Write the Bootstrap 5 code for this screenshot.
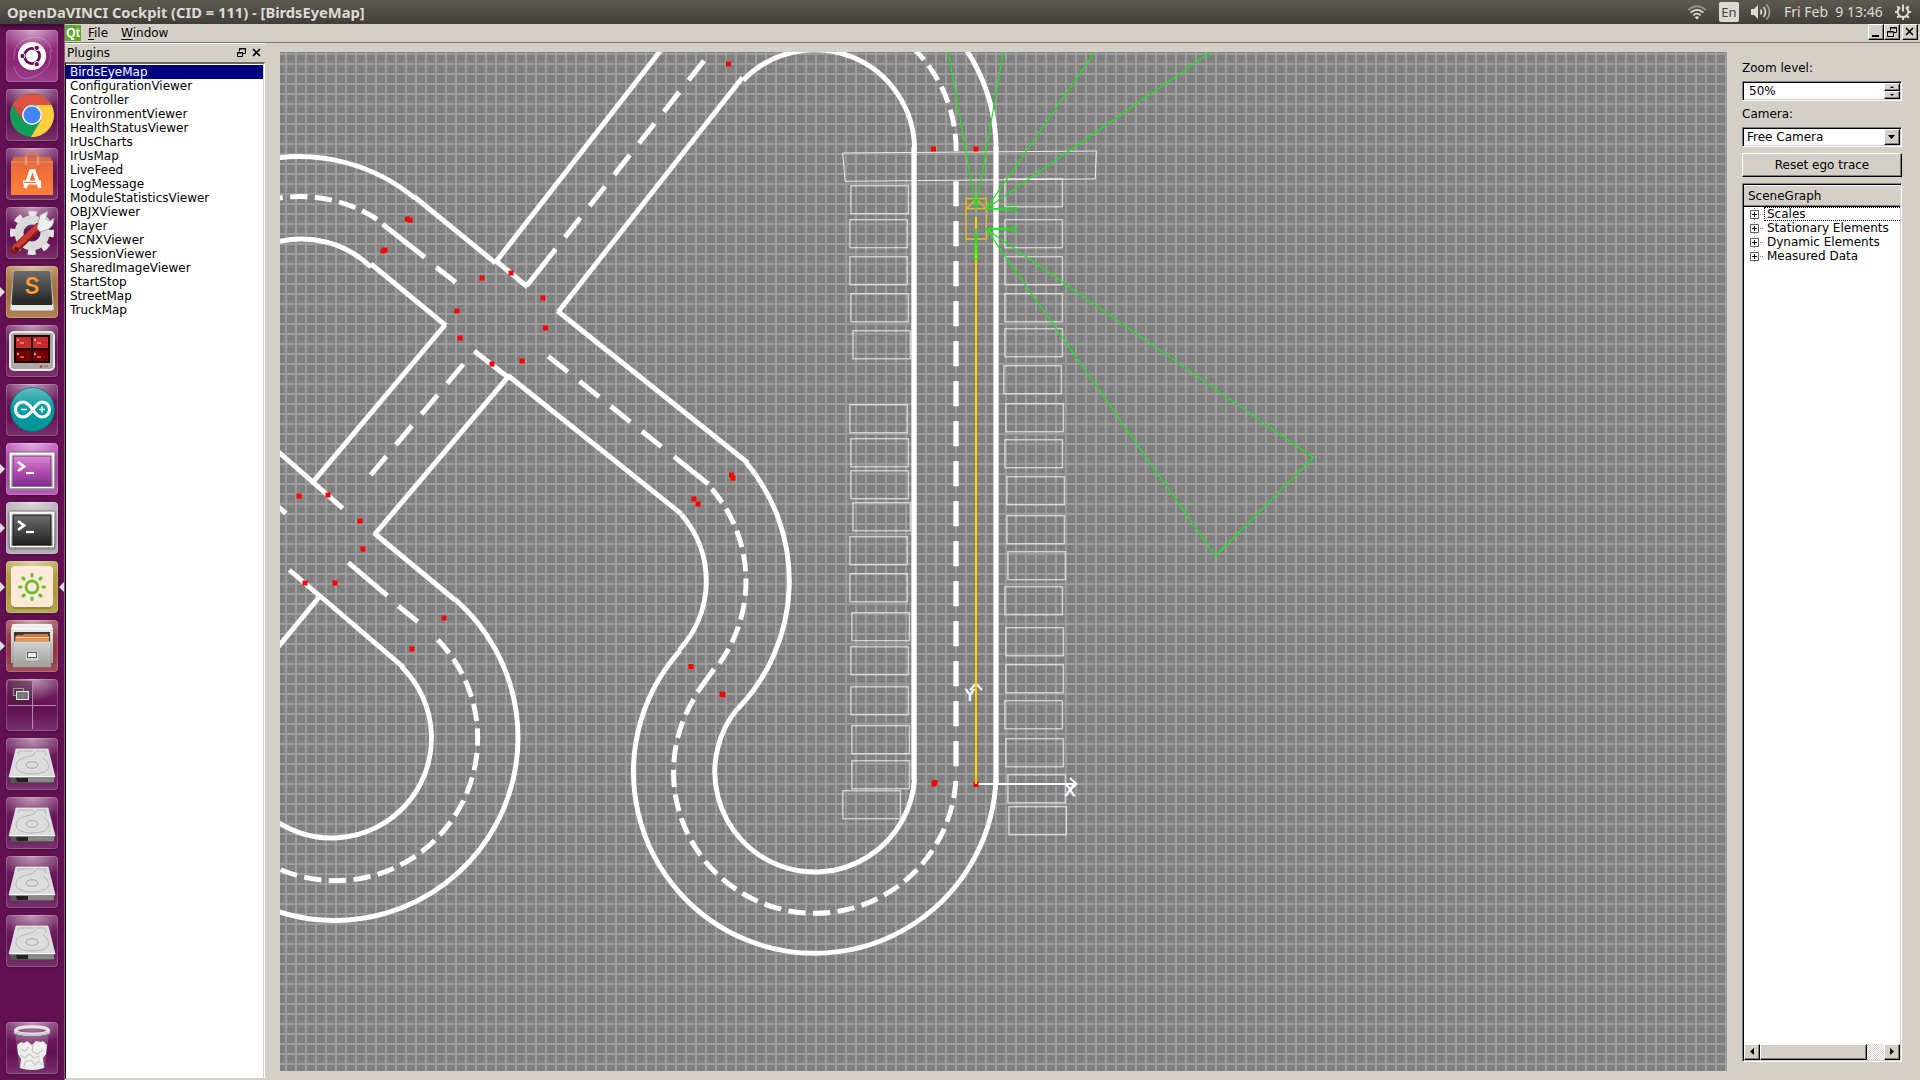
<!DOCTYPE html>
<html lang="en">
<head>
<meta charset="utf-8">
<title>OpenDaVINCI Cockpit</title>
<link rel="stylesheet" href="https://cdn.jsdelivr.net/npm/bootstrap@5.3.0/dist/css/bootstrap.min.css">
<style>
:root{--face:#d4d0c8;--shade:#808080}
body{width:1920px;height:1080px;overflow:hidden;background:var(--face);color:#000;font:12px/14px "DejaVu Sans",sans-serif}
svg{display:block}
.topbar{height:24px;background:linear-gradient(#5d5a50,#55534b 30%,#3f3e39);color:#dfdbd2;font:14px/18px "Noto Sans",sans-serif}
.topbar .wintitle{font-weight:700;font-size:14.7px;padding-left:7px;white-space:pre}
.tray{height:24px;width:240px;padding-left:7px;gap:12px}
.clock{white-space:pre;width:99px}
.lang{width:20px;height:20px;background:#dfdbd2;color:#45433e;border-radius:2px;font:13px/20px "Noto Sans",sans-serif;text-align:center}
.launcher{width:65px;background:linear-gradient(#3a0a31,#631053 6px);border-right:1px solid #8a5a80;padding:6px 0 6px 6px}
.tile{width:52px;height:52px;border-radius:4px;margin-bottom:7px;position:relative;background:radial-gradient(ellipse 34px 22px at 50% 0,rgba(255,255,255,.55),rgba(255,255,255,0)),linear-gradient(rgba(255,255,255,.1),rgba(255,255,255,0) 60%,rgba(255,255,255,.14)),var(--tint,#631053);box-shadow:inset 0 0 0 1px rgba(255,255,255,.2),0 1px 3px rgba(0,0,0,.25)}
.tile.running::before,.tile.focused::after{content:"";position:absolute;top:21px;border:5px solid transparent}
.tile.running::before{left:-6px;border-left-color:#ddd;border-right:0}
.tile.focused::after{right:-6px;border-right-color:#ddd;border-left:0}
.tint-dash{--tint:#8c2478}.tint-editor{--tint:#a56f35}.tint-pink{--tint:#b43bb3}.tint-grey{--tint:#aaa1ac}.tint-olive{--tint:#aa9a35}.tint-red{--tint:#8d3540}
.menubar-qt{height:19px;border-bottom:1px solid #7b7871}
.menubar-qt .qt-logo{margin-top:1px}
.menubar-qt .entry{margin-left:7px;line-height:18px}
.menubar-qt .entry+.entry{margin-left:13px}
.menubar-qt u{text-underline-offset:2px}
.raised{background:var(--face);border:1px solid;border-color:#fff #000 #000 #fff;box-shadow:inset -1px -1px var(--shade)}
.sunken{background:#fff;border:1px solid;border-color:var(--shade) #fff #fff var(--shade);box-shadow:inset 1px 1px #000,inset -1px -1px var(--face)}
.mdi{width:16px;height:16px}
.mdi-group{padding-right:2px}
.mdi-close{margin-left:2px}
.dock{width:200px;border-top:1px solid #fff;padding-bottom:1px}
.dock-title{height:18px;line-height:18px;padding:0 3px 0 2px}
.plugins{border:1px solid;border-color:#6d6a64 #fff #d4d0c8 #000;border-top-width:2px;padding:1px 1px 0 0;background:#fff;box-shadow:inset -1px 0 var(--face)}
.plugins div{height:14px;line-height:14px;padding-left:4px}
.plugins .chosen{background:#000080;color:#fff}
.mapview{width:1447px;height:1019px;margin:9px 15px 0 15px;background:#808080}
.side{width:160px;padding-top:18px}
.side .caption{height:14px;line-height:14px}
.side .field{height:20px;padding:1px;margin:6px 0}
.side .field .value{line-height:17px;padding-left:5px}
.side .field .choice{line-height:16px;padding-left:3px}
.reset{height:24px;line-height:22px}
.tree{height:879px;margin-top:6px;padding:1px}
.tree-head{height:22px;line-height:21px;padding-left:4px;background:var(--face);border-top:1px solid #fff;border-bottom:1px solid #000;box-shadow:inset 0 -1px var(--shade)}
.tree-row{height:14px;padding-left:6px}
.tree-row svg{width:14px;height:14px;flex:none}
.tree-row .node{flex:1;padding-left:3px;line-height:14px;white-space:nowrap;height:14px}
.tree-row .current{border:1px dotted #000;border-right:0;padding-left:2px;line-height:12px}
.hbar{height:16px;background:conic-gradient(#fff 25%,#d4d0c8 0 50%,#fff 0 75%,#d4d0c8 0) 0 0/2px 2px}
.thumb{width:107px}
</style>
<script src="https://cdn.jsdelivr.net/npm/bootstrap@5.3.0/dist/js/bootstrap.bundle.min.js"></script>
</head>
<body class="d-flex flex-column">
<header class="topbar d-flex justify-content-between align-items-center flex-shrink-0">
  <div class="wintitle">OpenDaVINCI Cockpit (CID = 111) - [BirdsEyeMap]</div>
  <div class="tray d-flex align-items-center">
    <svg width="20" height="16" viewBox="0 0 20 16" fill="none" stroke="#dfdbd2" stroke-width="1.7"><path d="M1 6Q10-1.5 19 6" opacity=".45"/><path d="M3.6 8.7Q10 3 16.4 8.700"/><path d="M6.300 11.400Q10 8 13.700 11.400"/><path d="M7.800 13.200 10 15.500 12.200 13.200Q10 11.500 7.800 13.200Z" fill="#dfdbd2" stroke="none"/></svg>
    <div class="lang">En</div>
    <svg width="21" height="18" viewBox="0 0 21 18" fill="none" stroke="#dfdbd2" stroke-width="1.600"><path d="M0 6h3l4-4v14l-4-4H0z" fill="#dfdbd2" stroke="none"/><path d="M9.500 6.500q2 2.500 0 5"/><path d="M12.500 4q4 5 0 10"/><path d="M15.500 1.500q6 7.500 0 15" opacity=".6"/></svg>
    <span class="clock">Fri Feb  9 13:46</span>
    <svg width="16" height="18" viewBox="-8 -9 16 18" fill="none" stroke="#dfdbd2" stroke-width="2"><path d="M-2.800-4.700A5.300 5.300 0 1 0 2.800-4.700"/><path d="M0-7.500V-.5"/><path d="M-5.500 0H-8M5.500 0H8M0 5.500V8M-4 4-5.800 5.800M4 4 5.800 5.800M-4-4-5.800-5.800M4-4 5.800-5.800"/></svg>
  </div>
</header>
<div class="d-flex flex-grow-1">
  <nav class="launcher d-flex flex-column flex-shrink-0">
    <svg width="0" height="0" class="position-absolute"><defs>
      <linearGradient id="metal" x2="0" y2="1"><stop stop-color="#f4f4f2"/><stop offset="1" stop-color="#a0a09e"/></linearGradient>
      <linearGradient id="dark" x2="0" y2="1"><stop stop-color="#6c6c6c"/><stop offset="1" stop-color="#222"/></linearGradient>
      <linearGradient id="pink" x2="0" y2="1"><stop stop-color="#d58bce"/><stop offset=".5" stop-color="#b44cb2"/><stop offset="1" stop-color="#79308a"/></linearGradient>
      <linearGradient id="bag" x2="0" y2="1"><stop stop-color="#d9693c"/><stop offset=".4" stop-color="#f07038"/><stop offset="1" stop-color="#ff8038"/></linearGradient>
      <linearGradient id="teal" x2="0" y2="1"><stop stop-color="#66bcc0"/><stop offset=".5" stop-color="#009aa0"/><stop offset="1" stop-color="#00949a"/></linearGradient>
      <symbol id="disk" viewBox="0 0 52 52"><path d="M4 39h44l-1 6H5z" fill="#555"/><path d="M10 40h12v4H11z" fill="#222"/><path d="M22 40h26v4H22z" fill="#888"/><path d="M10 11h32l7 28H3z" fill="#dcdcdc" stroke="#efefef" stroke-width=".7"/><path d="M3.500 38.500h45" stroke="#fff"/><path d="M12 16l1-3h14M30 13h9l1 5M29 14l-1 3-11 3q-8 3-7 9 2 7 16 7 16 0 17-8-.500-5-6-8" fill="none" stroke="#b8b8b8"/><ellipse cx="26" cy="27" rx="6" ry="3.300" fill="#ddd" stroke="#aaa"/></symbol>
      <symbol id="term" viewBox="0 0 52 52"><rect x="3" y="9" width="46" height="38" rx="1.500" fill="url(#metal)" stroke="#777"/><rect x="4.500" y="10.500" width="43" height="34" fill="none" stroke="#fff"/></symbol>
    </defs></svg>
    <div class="tile tint-dash"><svg viewBox="0 0 52 52"><g fill="none" stroke="#fff" stroke-opacity=".25"><path d="M8 30Q6 12 24 8T46 22"/><path d="M44 20Q48 38 30 46T8 36"/></g><circle cx="26" cy="26" r="14" fill="#fff"/><circle cx="26" cy="26" r="7.600" fill="none" stroke="#631053" stroke-width="2.800"/><g fill="#631053" stroke="#fff" stroke-width="1"><circle cx="16.500" cy="26" r="2.600"/><circle cx="30.800" cy="17.800" r="2.600"/><circle cx="30.800" cy="34.200" r="2.600"/></g></svg></div>
    <div class="tile"><svg viewBox="0 0 52 52"><circle cx="26" cy="26" r="22" fill="#0f9d58"/><path d="M26 26 6.500 16A22 22 0 0 1 45.500 16H26z" fill="#db5345"/><path d="M45.500 16A22 22 0 0 1 25 48L35 31 30 16z" fill="#ffcd40"/><path d="M6.500 16 17 31 26 26V16z" fill="#db5345"/><path d="M6.500 16 17 32 22 30 18 20z" fill="#c8463a" opacity=".6"/><circle cx="26" cy="26" r="10" fill="#f1f1f1"/><circle cx="26" cy="26" r="8.400" fill="#4285f4"/></svg></div>
    <div class="tile"><svg viewBox="0 0 52 52"><path d="M20 18V9q0-3.500 3-3.500h6q3 0 3 3.500v9" fill="none" stroke="#dd7a50" stroke-width="2.600"/><path d="M5 14 8 9h36l3 5v33H5z" fill="url(#bag)"/><path d="M5 14h42" stroke="#ee9873"/><path d="M20 17V9M32 17V9" stroke="#e99a78" stroke-width="2.500"/><g fill="none" stroke="#fff" stroke-width="3.600"><path d="M19 40 25 23h3l6 17"/><path d="M17 34.500H35" stroke-width="4"/></g><path d="M18 34.500h12" stroke="#ee7038"/></svg></div>
    <div class="tile"><svg viewBox="0 0 52 52"><circle cx="26" cy="26" r="13" fill="none" stroke="#dadada" stroke-width="9"/><circle cx="26" cy="26" r="19.500" fill="none" stroke="#e4e4e4" stroke-width="5" stroke-dasharray="8 7.320" stroke-dashoffset="4"/><path d="M8 43 32 20" stroke="#831a1a" stroke-width="8" stroke-linecap="round"/><path d="M9 41 31 20" stroke="#cb3a34" stroke-width="5.500" stroke-linecap="round"/><path d="M31 21 34 8l8-4-2 8 4 2 4-3q0 10-8 12l-6 2z" fill="#eee" stroke="#999" stroke-width=".8"/><circle cx="10" cy="42" r="2" fill="#661111"/></svg></div>
    <div class="tile running tint-editor"><svg viewBox="0 0 52 52"><path d="M7 7h38l3 34v2q0 2-3 2H7q-3 0-3-2v-2z" fill="#e8e8e8" stroke="#777" stroke-width=".6"/><path d="M10 5h32q2 0 2.500 3l2 30H5.500l2-30q.500-3 2.500-3z" fill="url(#dark)"/><path d="M6 34h40v5H6z" fill="#292929"/><text x="26" y="28" text-anchor="middle" font-family="Inter" font-weight="600" font-size="23" fill="#ff9c2e">S</text></svg></div>
    <div class="tile"><svg viewBox="0 0 52 52"><rect x="4" y="7" width="44" height="38" rx="4" fill="#a9aaa3" stroke="#e7e7e3" stroke-width="2"/><rect x="8" y="10" width="36" height="28" fill="#200"/><path d="M10 12h15v11H10zM27 12h15v11H27z" fill="#c82c2c"/><path d="M10 25h15v11H10zM27 25h15v11H27z" fill="#740000"/><g fill="none" stroke="#fcc" stroke-width=".9"><path id="prm" d="M11 14l2 1-2 1M14 18h4"/><use href="#prm" x="17"/><use href="#prm" y="14"/><use href="#prm" x="17" y="14"/></g><circle cx="35" cy="41.500" r="1.200" fill="red"/><path d="M38 41.500h4" stroke="#888" stroke-width="2"/></svg></div>
    <div class="tile"><svg viewBox="0 0 52 52"><circle cx="26.500" cy="25.500" r="22" fill="url(#teal)" stroke="#087177" stroke-width=".8"/><path d="M27 25.500C22 19 19 18 17 18a7.500 7.500 0 0 0 0 15c3 0 6-2 10-7.500S33 18 36 18a7.500 7.500 0 0 1 0 15c-3 0-6-2-9-7.500z" fill="none" stroke="#fff" stroke-width="3.200"/><path d="M15 25.500h6M33 25.500h6M36 22.500v6" stroke="#fff" stroke-width="1.600"/></svg></div>
    <div class="tile running tint-pink"><svg viewBox="0 0 52 52"><use href="#term"/><rect x="7" y="13" width="38" height="30" fill="url(#pink)" stroke="#83338c"/><path d="M12 19l6 4.500-6 4.500" fill="none" stroke="#fff" stroke-width="2.800"/><path d="M20 30h8" stroke="#fff" stroke-width="2.200"/></svg></div>
    <div class="tile running tint-grey"><svg viewBox="0 0 52 52"><use href="#term"/><rect x="7" y="13" width="38" height="30" fill="url(#dark)" stroke="#111"/><path d="M12 19l6 4.500-6 4.500" fill="none" stroke="#fff" stroke-width="2.800"/><path d="M20 30h8" stroke="#fff" stroke-width="2.200"/></svg></div>
    <div class="tile running focused tint-olive"><svg viewBox="0 0 52 52"><rect x="5" y="6" width="42" height="42" rx="4" fill="#756c22" opacity=".5"/><rect x="5" y="5" width="42" height="41" rx="4" fill="#ffe9d9"/><circle cx="26" cy="26" r="6" fill="none" stroke="#70bd35" stroke-width="2.800"/><g stroke="#70bd35" stroke-width="3.200" stroke-linecap="round"><path d="M26 13.500v1.500M26 37v1.500M13.500 26H15M37 26h1.500M17 17l1 1M34 34l1 1M17 35l1-1M34 18l1-1"/></g></svg></div>
    <div class="tile running tint-red"><svg viewBox="0 0 52 52"><path d="M6 5q1-1 2-1h36q1 0 2 1l1 6v32H5V11z" fill="url(#metal)"/><path d="M5 8.500h42" stroke="#fff"/><path d="M8 12h36v10H8z" fill="#3b3a38"/><path d="M9 17l2-2h6l1-1h24v2h1v6H9z" fill="#d8793c"/><path d="M10 17.700h33" stroke="#fff0d0"/><path d="M10 20h33" stroke="#f0b070"/><path d="M7 21.500h38v24.500q0 1-1 1H8q-1 0-1-1z" fill="url(#metal)" stroke="#999" stroke-width=".5"/><path d="M7 22h38v24H7z" fill="#999" opacity=".35"/><rect x="19.500" y="30.500" width="13" height="10" rx="2" fill="#d4d4d4" stroke="#bbb"/><rect x="21.500" y="32.500" width="9" height="5" fill="#eee" stroke="#555"/></svg></div>
    <div class="tile"><svg viewBox="0 0 52 52"><rect x="2" y="2" width="24" height="24" fill="#4a1b3c" opacity=".55"/><path d="M26.500 2v48M2 26.500h48" stroke="#b58cae"/><rect x="7.500" y="9.500" width="10" height="7" fill="none" stroke="#999"/><rect x="10.500" y="12.500" width="12" height="8" fill="#777" stroke="#e6e6e6"/></svg></div>
    <div class="tile"><svg viewBox="0 0 52 52"><use href="#disk"/></svg></div>
    <div class="tile"><svg viewBox="0 0 52 52"><use href="#disk"/></svg></div>
    <div class="tile"><svg viewBox="0 0 52 52"><use href="#disk"/></svg></div>
    <div class="tile"><svg viewBox="0 0 52 52"><use href="#disk"/></svg></div>
    <div class="tile mt-auto mb-0"><svg viewBox="0 0 52 52"><path d="M9 10 13 46q13 4 26 0l4-36z" fill="#fff" opacity=".16"/><path d="M11 23l4-3 3 1 3-2 5 4 4-4 5 1 2-1 4 4-1 9-3 4 1 10q-12 4-24 0l1-9-3-5z" fill="#eeeeec"/><path d="M14 27l5 2 4-4M27 22l-1 7 5 3 6-4M14 33l5 3 4-4 5 4 6-2M18 45l1-5 6-2 4 5 4-4 3 4" fill="none" stroke="#c8c8c2" stroke-width="1.100"/><ellipse cx="26" cy="8.500" rx="16.500" ry="3.800" fill="none" stroke="#e6e8e6" stroke-width="3"/><path d="M8 9v2.500q18 5 36 0V9q-18 6-36 0z" fill="#c9ccc9"/></svg></div>
  </nav>
  <main class="d-flex flex-column flex-grow-1">
    <div class="menubar-qt d-flex flex-shrink-0">
      <svg width="16" height="16" viewBox="0 0 16 16" class="qt-logo"><path d="M0 0h16v16H0z" fill="#60a82d"/><text x="8" y="12" text-anchor="middle" font-family="Liberation Sans" font-weight="700" font-size="12" fill="#fff">Qt</text></svg>
      <span class="entry"><u>F</u>ile</span><span class="entry"><u>W</u>indow</span>
      <div class="mdi-group d-flex ms-auto">
        <svg class="mdi raised" viewBox="0 0 14 14"><path d="M3 10h7v2H3z"/></svg>
        <svg class="mdi raised" viewBox="0 0 14 14" fill="none" stroke="#000"><path d="M5.500 5.500v-3h6v5h-3M5 3h7M2.500 6.500h6v5h-6zM2 7h7"/></svg>
        <svg class="mdi mdi-close raised" viewBox="0 0 14 14" stroke="#000" stroke-width="1.600"><path d="M3 3l7 7M10 3l-7 7"/></svg>
      </div>
    </div>
    <div class="d-flex flex-grow-1">
      <aside class="dock d-flex flex-column flex-shrink-0">
        <div class="dock-title d-flex align-items-center"><span>Plugins</span>
          <svg class="ms-auto" width="26" height="12" viewBox="0 0 26 12" fill="none" stroke="#000"><path d="M3.500 4.500v-3h6v5h-3M3 2h7M1.500 5.500h5v4h-5zM1 6h6"/><path d="M17 2l7 7M24 2l-7 7" stroke-width="1.600"/></svg></div>
        <div class="plugins flex-grow-1">
          <div class="chosen">BirdsEyeMap</div><div>ConfigurationViewer</div><div>Controller</div><div>EnvironmentViewer</div><div>HealthStatusViewer</div><div>IrUsCharts</div><div>IrUsMap</div><div>LiveFeed</div><div>LogMessage</div><div>ModuleStatisticsViewer</div><div>OBJXViewer</div><div>Player</div><div>SCNXViewer</div><div>SessionViewer</div><div>SharedImageViewer</div><div>StartStop</div><div>StreetMap</div><div>TruckMap</div>
        </div>
      </aside>
      <svg class="mapview flex-shrink-0" viewBox="280 52 1447 1019">
        <defs><pattern id="grid" x="285" y="63" width="10" height="10" patternUnits="userSpaceOnUse"><path d="M0 0h10v2H2v8H0z" fill="#9d9d9d"/></pattern></defs>
        <path d="M280 52h1447v1019H280z" fill="url(#grid)"/>
        <g id="roads" fill="none" stroke="#fff" stroke-width="4.900"></g>
        <g id="boxes" fill="none" stroke="#fff" stroke-opacity=".6" stroke-width="1.500"></g>
        <path d="M842.700 153 1096.300 151 1095.300 178.900 845.200 181.300Z" fill="none" stroke="#fff" stroke-opacity=".85"/>
        <g fill="none" stroke="#fff" stroke-width="2"><path d="M976 784h100M1070 778l6.500 6-6.500 6M970 690l6-6.500 6 6.500"/></g>
        <g fill="#fff" stroke="#fff" stroke-width=".5" font-family="DejaVu Sans" font-size="16" text-anchor="middle"><text x="1070" y="796">X</text><text x="970" y="700.500">Y</text></g>
        <g id="dots" fill="#f00"></g>
        <path d="M976 217v567" stroke="#ffd000" stroke-width="2"/>
        <path d="M966 198.500h20.500v40.500H966zM966 208.500h20.500M967 208l9-9 9.500 9" fill="none" stroke="#e3b91c" stroke-width="1.300"/>
        <g fill="none" stroke="#14ea14" stroke-width="1.200"><path d="M948.300 52 976 209 1003.300 52M976 198v10M1095 52 986 209 1210.700 52M986 209l30.500-1.500v3zM986 228.700l30.500-1v3zM986 228.700 1313.300 457.500 1215.300 556ZM976 228.500l-1.500 30.500h3z"/></g>
      </svg>
      <aside class="side flex-shrink-0">
        <div class="caption">Zoom level:</div>
        <div class="field sunken d-flex"><span class="value">50%</span>
          <div class="ms-auto d-flex flex-column"><svg class="raised" width="16" height="8" viewBox="0 0 14 6"><path d="M5 4h4L7 2z"/></svg><svg class="raised" width="16" height="8" viewBox="0 0 14 6"><path d="M5 2h4L7 4z"/></svg></div></div>
        <div class="caption">Camera:</div>
        <div class="field sunken d-flex"><span class="choice">Free Camera</span>
          <svg class="raised ms-auto" width="16" height="16" viewBox="0 0 14 14"><path d="M3 5h7l-3.500 4z"/></svg></div>
        <div class="reset raised text-center">Reset ego trace</div>
        <div class="tree sunken d-flex flex-column">
          <div class="tree-head flex-shrink-0">SceneGraph</div>
          <div class="tree-row d-flex"><svg viewBox="0 0 14 14"><use href="#plus"/></svg><span class="node current">Scales</span></div>
          <div class="tree-row d-flex"><svg viewBox="0 0 14 14"><use href="#plus"/></svg><span class="node">Stationary Elements</span></div>
          <div class="tree-row d-flex"><svg viewBox="0 0 14 14"><use href="#plus"/></svg><span class="node">Dynamic Elements</span></div>
          <div class="tree-row d-flex"><svg viewBox="0 0 14 14"><g id="plus" fill="none"><path d="M4.500 1v2M4.500 12v2M10 7.500h4" stroke="#808080" stroke-dasharray="1"/><path d="M.500 3.500h8v8h-8z" fill="#fff" stroke="#606060"/><path d="M2 7.500h5M4.500 5v5" stroke="#000"/></g></svg><span class="node">Measured Data</span></div>
          <div class="hbar mt-auto d-flex">
            <svg class="raised" width="16" height="16" viewBox="0 0 14 14"><path d="M9 3v7L5 6.500z"/></svg>
            <div class="thumb raised"></div>
            <svg class="raised ms-auto" width="16" height="16" viewBox="0 0 14 14"><path d="M5 3v7l4-3.500z"/></svg>
          </div>
        </div>
      </aside>
    </div>
  </main>
</div>
<script>
const NS = 'http://www.w3.org/2000/svg';
const add = (id, tag, attrs) => {
  const el = document.createElementNS(NS, tag);
  for (const k in attrs) el.setAttribute(k, attrs[k]);
  document.getElementById(id).appendChild(el);
};
const pt = (cx, cy, r, a) => [cx + r * Math.cos(a * Math.PI / 180), cy + r * Math.sin(a * Math.PI / 180)];
// Arc from angle a to angle b, in degrees clockwise from east
const arc = (cx, cy, r, a, b) => add('roads', 'path', {
  d: `M${pt(cx, cy, r, a)}A${r} ${r} 0 ${Math.abs(b - a) > 180 ? 1 : 0} ${b > a ? 1 : 0} ${pt(cx, cy, r, b)}`
});
const dashArc = (cx, cy, r, start, count, step) => {
  for (let i = 0; i < count; i++) arc(cx, cy, r, start + i * step, start + i * step + Math.sign(step) * 7);
};
const line = (x1, y1, x2, y2, dashed) => add('roads', 'path', {
  d: `M${x1} ${y1}L${x2} ${y2}`, ...(dashed ? {'stroke-dasharray': '25 15'} : {})
});

// South-east loop
arc(814.8, 772, 181.3, 2, 222);
arc(814.8, 772, 100, 4, 219);
dashArc(814.8, 772, 141.3, 3.6, 21, 10.02);
line(697.5, 692, 714, 669);
// Bend joining the loop and the crossing road
arc(605, 581, 184.3, -40, 44);
arc(605, 581, 101.3, -41, 43);
dashArc(605, 581, 141, -40.8, 8, 9.94);
line(674, 456.7, 708.3, 484);
// North-east curve
arc(814.8, 149.5, 181.3, 0, -60);
arc(814.8, 149.5, 99.7, 0, -136);
dashArc(814.8, 149.5, 141.3, 0.6, 6, -10);
// Road to the north-east
line(661, 50, 496, 261.7);
line(742.5, 77.500, 558.3, 311.7);
line(704, 60.7, 565, 237.3, true);
line(555.7, 249, 526.7, 285.7);
line(495, 260, 527.5, 287);
// North-west curve
arc(299, 338.5, 182, -100, -50.5);
arc(301.5, 339, 100, -105, -46);
dashArc(300, 338, 141.5, -104, 5, 10);
line(414, 196.5, 495.5, 263);
line(371, 264, 446, 325.6);
line(382.7, 224.3, 424.7, 257.3);
line(436.3, 267.3, 455.7, 282.3);
// Crossing road towards the south-west
line(445, 325, 313.3, 481.7);
line(508.3, 376.7, 375, 534);
line(463.3, 364.3, 370.7, 475, true);
line(474.3, 351, 508.3, 377.5);
line(508, 375.5, 681.5, 514);
line(557.5, 311, 748, 463);
line(548.3, 356.3, 661.3, 446.7, true);
// South-west junction and loop
line(278, 451.5, 342.7, 508.3);
line(374, 533, 455, 600);
line(320, 596, 403.5, 667.3);
line(289.3, 570, 321, 597);
line(320, 596, 278, 647);
line(278, 506.5, 286, 513.3);
line(348.3, 562.7, 387.3, 595.7);
line(398.3, 606, 417.7, 621.7);
arc(335, 737.5, 183, -49, 115);
arc(331.5, 738, 100, -45.5, 130);
dashArc(335.5, 738.5, 142.2, -44, 17, 9.98);
// Long straight lane
for (const [x, end] of [[914, 780], [996, 784]]) add('roads', 'path', {d: `M${x} 147V${end}`, 'stroke-width': 5.300});
add('roads', 'path', {d: 'M956 181.300V767', 'stroke-width': 5.300, 'stroke-dasharray': '25 15'});

// Parked boxes along both sides
const boxes = [[850.5,185.5],[849.5,219.5],[849.5,256.5],[850.5,293.5],[852.5,330.5],[849.5,404.5],[850.5,438.5],[850.5,470.5],[852.5,502.5],[849.5,536.5],[849.5,573.5],[851.5,612.5],[850.5,646.5],[850.5,686.5],[851.5,725.5],[851.5,760.5],[842.5,790.5],
[1004.5,178.5],[1004.5,219.5],[1004.5,256.5],[1004.5,293.5],[1004.5,328.5],[1003.5,365.5],[1005.5,403.5],[1004.5,439.5],[1006.5,476.5],[1006.5,515.5],[1007.5,551.5],[1004.5,586.5],[1005.5,627.5],[1005.5,664.5],[1004.5,700.5],[1005.5,738.5],[1007.5,774.5],[1008.5,806.5]];
for (const [x, y] of boxes) add('boxes', 'rect', {x: x + 0.4, y: y + 0.2, width: 57.5, height: 28});

// Waypoints
const dots = [[407.5,219],[410,220],[383,251],[385,250],[482,278],[511,273],[543,298],[545.5,328],[457,311],[460,338],[492,364],[522,361],[728.5,64],
[299,496],[328,495],[360,521],[363,549],[305,583],[335,583],[444,618],[412,649],[731.5,475],[733,478],[694,499],[698,504],[691,666.5],[722,694],[723,694.5],[933.5,149],[976,149],[935,782.5],[934,784],[976,784.5]];
for (const [x, y] of dots) add('dots', 'rect', {x: x - 2.5, y: y - 2.5, width: 5, height: 5});
</script>
</body>
</html>
